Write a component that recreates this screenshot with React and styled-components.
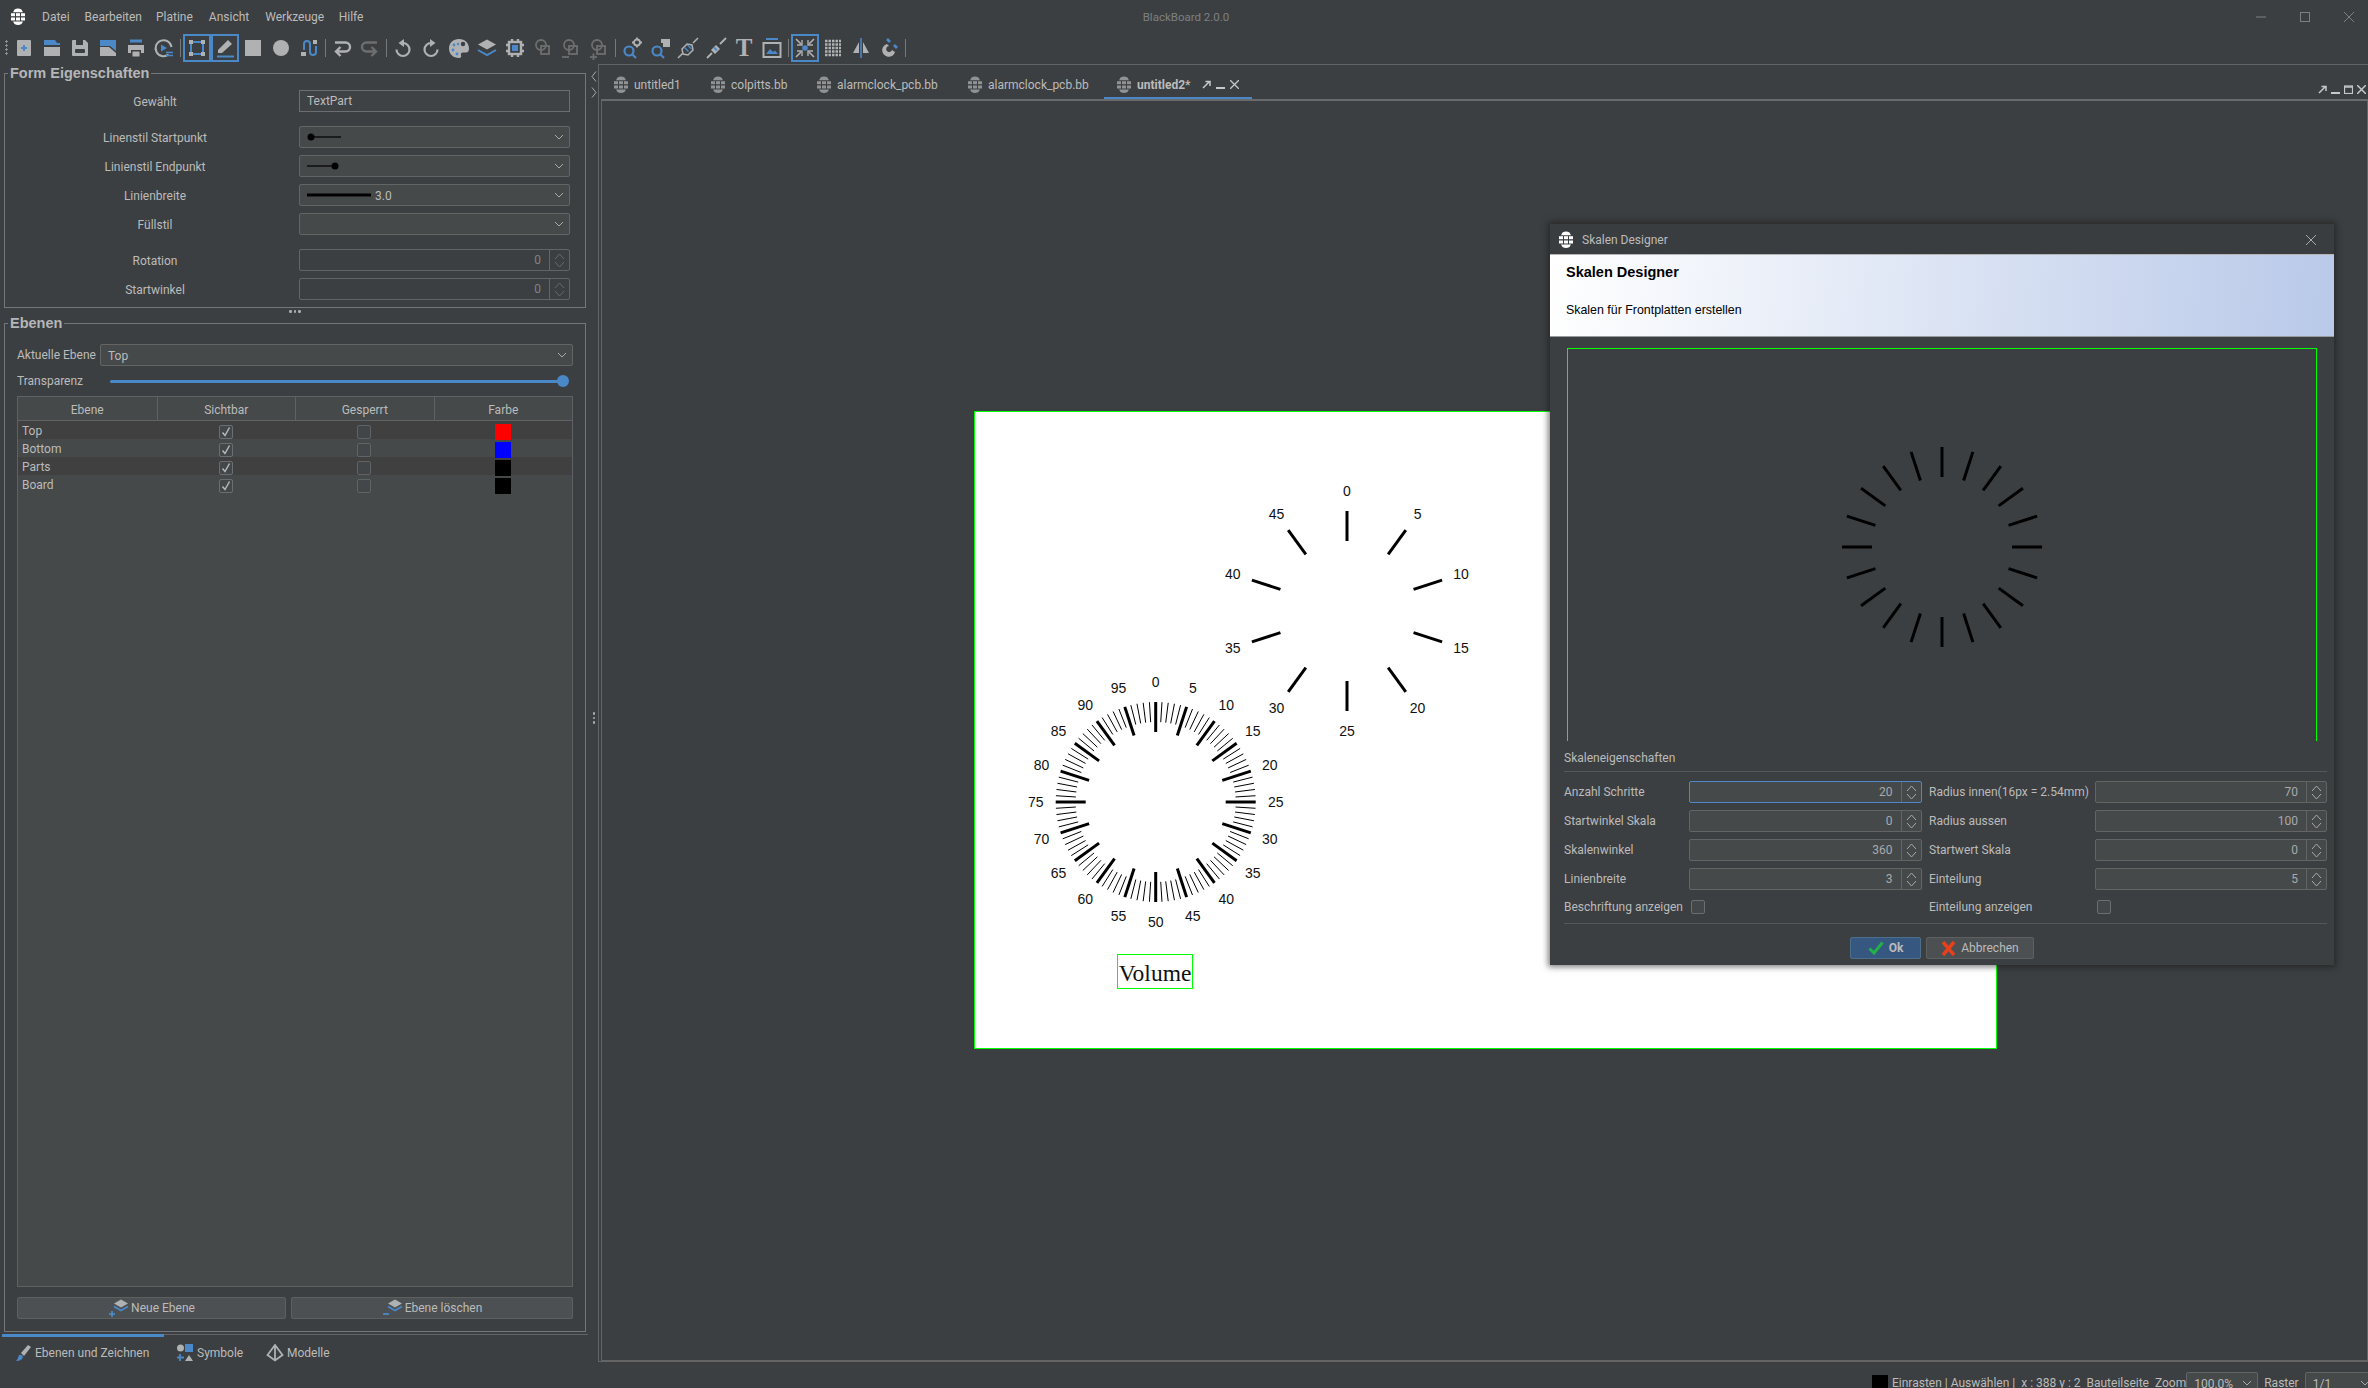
import React from 'react';
import styled, { createGlobalStyle } from 'styled-components';

const G = '#afb1b3';
const B = '#4a88c7';
const D = '#6e6e6e';
const BG = '#3c3f41';

const GlobalStyle = createGlobalStyle`
    html, body {
        margin: 0;
        padding: 0;
        background: ${BG};
    }
    * {
        box-sizing: border-box;
    }
`;

const Root = styled.div`
    position: relative;
    width: 2368px;
    height: 1388px;
    overflow: hidden;
    display: flex;
    flex-direction: column;
    background: ${BG};
    color: #bbbbbb;
    font-family: Roboto, 'Liberation Sans', sans-serif;
    font-size: 12px;
`;

/* title bar */
const TitleBar = styled.div`
    height: 34px;
    flex: none;
    display: grid;
    grid-template-columns: 1fr auto 1fr;
    align-items: center;
    padding-left: 10px;
`;

const MenuList = styled.div`
    display: flex;
    align-items: center;
`;

const MenuItem = styled.span`
    margin-left: ${(p) => p.$gap}px;
`;

const AppTitle = styled.div`
    color: #7d7f81;
    font-size: 11.5px;
    margin-right: 6px;
`;

const WindowButtons = styled.div`
    display: flex;
    justify-content: flex-end;
    align-items: center;
    gap: 34px;
    padding-right: 14px;
`;

/* toolbar */
const Toolbar = styled.div`
    height: 28px;
    flex: none;
    display: flex;
    align-items: center;
    padding-left: 5px;
`;

const Grip = styled.div`
    width: 5px;
    height: 16px;
    background-image: radial-gradient(circle at 1.5px 1.5px, #8a8c8e 1px, transparent 1.2px);
    background-size: 5px 4px;
`;

const ToolButton = styled.div`
    width: 28px;
    height: 28px;
    flex: none;
    display: flex;
    align-items: center;
    justify-content: center;
    border: 2px solid ${(p) => (p.$active ? B : 'transparent')};
`;

const ToolSep = styled.div`
    width: 5px;
    height: 18px;
    flex: none;
    display: flex;
    justify-content: center;
    &::after {
        content: '';
        width: 1px;
        background: #777a7c;
    }
`;

const ToolLetter = styled.span`
    font-family: 'Liberation Serif', serif;
    font-weight: 700;
    font-size: 25px;
    line-height: 24px;
    color: ${G};
`;

/* main */
const Body = styled.div`
    flex: 1;
    min-height: 0;
    display: flex;
`;

const LeftColumn = styled.div`
    width: 590px;
    flex: none;
    display: flex;
    flex-direction: column;
    padding: 3px 0 0 4px;
`;

const GroupBox = styled.fieldset`
    width: 582px;
    height: ${(p) => p.$height}px;
    flex: none;
    margin: 0;
    padding: ${(p) => p.$padding};
    border: 1px solid #747779;
    min-width: 0;
`;

const GroupTitle = styled.legend`
    margin-left: ${(p) => p.$shift}px;
    padding: 0 2px;
    height: 16px;
    line-height: 16px;
    font-family: 'Liberation Sans', sans-serif;
    font-weight: 700;
    font-size: 14.5px;
    color: #b4b6b8;
`;

const FormGrid = styled.div`
    display: grid;
    grid-template-columns: 294px 271px;
    grid-auto-rows: 22px;
    row-gap: 7px;
    align-items: center;
    margin-top: ${(p) => p.$top || 0}px;
`;

const FormLabel = styled.div`
    text-align: center;
    padding: 2px 0 0 6px;
`;

const LineField = styled.div`
    height: 22px;
    padding-left: 7px;
    line-height: 21px;
    background: #3f4244;
    border: 1px solid #6b6e70;
`;

const ComboBox = styled.div`
    height: 22px;
    width: ${(p) => (p.$width ? `${p.$width}px` : 'auto')};
    flex: none;
    display: flex;
    align-items: center;
    padding: 0 5px 0 7px;
    background: #45494a;
    border: 1px solid #646464;
    border-radius: 2px;
    margin-right: ${(p) => p.$right || 0}px;
`;

const ComboText = styled.div`
    flex: 1;
    display: flex;
    align-items: center;
    gap: 4px;
    padding-top: 2px;
    & svg {
        margin-top: -2px;
    }
`;

const SpinBox = styled.div`
    height: 22px;
    display: flex;
    align-items: center;
    justify-content: flex-end;
    background: ${(p) => (p.$enabled ? '#45494a' : BG)};
    color: ${(p) => (p.$enabled ? '#a8aaac' : '#808284')};
    border: 1px solid ${(p) => (p.$focus ? B : '#646464')};
    border-radius: 2px;
`;

const SpinArrows = styled.div`
    width: 20px;
    height: 100%;
    margin-left: 8px;
    display: flex;
    align-items: center;
    justify-content: center;
    border-left: 1px solid #646464;
`;

const Splitter = styled.div`
    height: 7px;
    width: 582px;
    flex: none;
    display: flex;
    justify-content: center;
    align-items: center;
    gap: 2px;
`;

const Dot = styled.span`
    width: 2.5px;
    height: 2.5px;
    border-radius: 50%;
    background: #aaacae;
`;

const LayerTop = styled.div`
    height: 22px;
    display: grid;
    grid-template-columns: 83px 1fr;
    align-items: center;
`;

const SliderRow = styled.div`
    height: 30px;
    display: grid;
    grid-template-columns: 93px 1fr;
    align-items: center;
`;

const SliderTrack = styled.div`
    position: relative;
    height: 3px;
    margin-right: 5px;
    background: ${B};
    border-radius: 2px;
`;

const SliderKnob = styled.div`
    position: absolute;
    right: -1px;
    top: -5px;
    width: 12px;
    height: 12px;
    border-radius: 50%;
    background: ${B};
`;

const LayerTable = styled.div`
    height: 891px;
    background: #45494a;
    border: 1px solid #5f6264;
`;

const TableHead = styled.div`
    height: 24px;
    display: grid;
    grid-template-columns: repeat(4, 1fr);
    border-bottom: 1px solid #5f6264;
`;

const HeadCell = styled.div`
    display: flex;
    align-items: center;
    justify-content: center;
    padding-top: 2px;
    border-left: ${(p) => (p.$first ? 'none' : '1px solid #5f6264')};
`;

const TableRow = styled.div`
    height: 18px;
    display: grid;
    grid-template-columns: repeat(4, 1fr);
    align-items: center;
    background: ${(p) => (p.$odd ? '#404040' : '#45494a')};
`;

const NameCell = styled.div`
    padding: 1px 0 0 4px;
    line-height: 18px;
`;

const CenterCell = styled.div`
    display: flex;
    justify-content: center;
    align-items: center;
`;

const CheckBox = styled.div`
    width: 14px;
    height: 14px;
    flex: none;
    display: flex;
    align-items: center;
    justify-content: center;
    background: #43474a;
    border: 1px solid #6b6e70;
    border-radius: 2px;
    margin-top: ${(p) => p.$top || 0}px;
    opacity: ${(p) => (p.$dim ? 0.75 : 1)};
`;

const ColorSwatch = styled.div`
    width: 16px;
    height: 16px;
    margin-top: 2px;
    background: ${(p) => p.$color};
`;

const ButtonRow = styled.div`
    margin-top: 10px;
    display: grid;
    grid-template-columns: 269px 1fr;
    gap: 5px;
`;

const PlainButton = styled.div`
    height: 22px;
    display: flex;
    align-items: center;
    justify-content: center;
    gap: 1px;
    background: #4c5052;
    border: 1px solid #5e6060;
    border-radius: 2px;
`;

const SideTabs = styled.div`
    margin: 2px 0 0 -2px;
    width: 586px;
    display: flex;
    border-top: 1px solid #646464;
`;

const SideTab = styled.div`
    width: ${(p) => p.$width}px;
    height: 34px;
    margin-top: -1px;
    padding-left: ${(p) => p.$pad}px;
    display: flex;
    align-items: center;
    gap: 3px;
    border-top: 3px solid ${(p) => (p.$active ? B : 'transparent')};
`;

const HandleColumn = styled.div`
    width: 8px;
    flex: none;
    display: flex;
    flex-direction: column;
    align-items: center;
    padding-top: 9px;
    gap: 5px;
`;

const VerticalDots = styled.div`
    margin-top: 609px;
    display: flex;
    flex-direction: column;
    gap: 2px;
`;

const RightColumn = styled.div`
    flex: 1;
    min-width: 0;
    display: flex;
    flex-direction: column;
`;

const EditorPane = styled.div`
    margin-top: 2px;
    height: 1298px;
    flex: none;
    display: flex;
    flex-direction: column;
    padding-left: 2px;
    border-top: 1px solid #646464;
    border-left: 1px solid #646464;
    border-bottom: 1px solid #646464;
`;

const DocTabs = styled.div`
    height: 35px;
    flex: none;
    display: flex;
    align-items: stretch;
    padding-left: 2px;
`;

const DocTab = styled.div`
    display: flex;
    align-items: center;
    gap: 5px;
    width: ${(p) => p.$width}px;
    padding-left: ${(p) => p.$pad}px;
    padding-top: 7px;
    font-weight: ${(p) => (p.$active ? 700 : 400)};
    border-bottom: 3px solid ${(p) => (p.$active ? B : 'transparent')};
`;

const TabActions = styled.div`
    display: flex;
    align-items: center;
    gap: 5px;
    margin-left: 6px;
`;

const CornerButtons = styled.div`
    margin-left: auto;
    display: flex;
    align-items: center;
    gap: 4px;
    padding: 14px 2px 0 0;
`;

const Canvas = styled.div`
    position: relative;
    flex: 1;
    margin-top: -1px;
    border-top: 2px solid #686a6c;
    border-left: 1px solid #646464;
    border-right: 1px solid #646464;
    border-bottom: 1px solid #646464;
`;

const Board = styled.div`
    position: absolute;
    left: 372px;
    top: 310px;
    width: 1023px;
    height: 638px;
    background: #ffffff;
    border: 1px solid #00ff00;
`;

const VolumeLabel = styled.div`
    position: absolute;
    left: 142px;
    top: 542px;
    width: 76px;
    height: 35px;
    padding-top: 3px;
    display: flex;
    align-items: center;
    justify-content: center;
    border: 1px solid #00ff00;
    font-family: 'Liberation Serif', serif;
    font-size: 23.5px;
    color: #111111;
`;

const StatusBar = styled.div`
    flex: 1;
    display: flex;
    align-items: flex-start;
    padding: 10px 0 0 1274px;
`;

const StatusSwatch = styled.div`
    width: 16px;
    height: 16px;
    flex: none;
    margin: 3px 4px 0 0;
    background: #000000;
`;

const StatusText = styled.div`
    flex: 1;
    line-height: 22px;
    white-space: pre;
`;

const StatusLabel = styled.div`
    flex: none;
    line-height: 22px;
    margin: 0 6px;
`;

/* dialog */
const Dialog = styled.div`
    position: absolute;
    left: 1550px;
    top: 224px;
    width: 784px;
    height: 741px;
    display: flex;
    flex-direction: column;
    background: ${BG};
    box-shadow: 0 0 6px 2px rgba(20, 20, 20, 0.55);
`;

const DialogTitle = styled.div`
    height: 30px;
    flex: none;
    display: flex;
    align-items: center;
    gap: 8px;
    padding: 1px 17px 0 8px;
    background: #3a3d40;
`;

const DialogClose = styled.div`
    margin-left: auto;
    display: flex;
`;

const WizardHeader = styled.div`
    height: 83px;
    flex: none;
    padding: 9px 15px 0 16px;
    color: #000000;
    font-family: 'Liberation Sans', sans-serif;
    background: linear-gradient(95deg, #ffffff 0%, #b9c9e9 100%);
    border-top: 1px solid #b5b5b5;
    border-bottom: 1px solid #9a9a9a;
`;

const WizardTitle = styled.div`
    font-size: 14.5px;
    font-weight: 700;
    line-height: 16px;
`;

const WizardText = styled.div`
    margin-top: 22px;
    font-size: 12.4px;
    line-height: 16px;
`;

const Preview = styled.div`
    height: 393px;
    flex: none;
    margin: 11px 17px 0 17px;
    padding-top: 3px;
    display: flex;
    align-items: center;
    justify-content: center;
    border: 1px solid #00ff00;
    border-bottom: none;
`;

const SectionTitle = styled.div`
    height: 31px;
    flex: none;
    margin: 0 7px 0 14px;
    padding-top: 2px;
    line-height: 31px;
    border-bottom: 1px solid #55585a;
`;

const ScaleForm = styled.div`
    margin: 9px 7px 0 14px;
    display: grid;
    grid-template-columns: 124.5px 233px 7.5px 165.5px 1fr;
    grid-auto-rows: 22px;
    row-gap: 7px;
    align-items: center;
`;

const CheckRow = styled.div`
    grid-column: ${(p) => p.$col};
    align-self: start;
    margin-left: ${(p) => p.$left || 0}px;
    display: flex;
    height: 20px;
    align-items: center;
`;

const DialogRule = styled.div`
    margin: 4px 7px 0 14px;
    height: 1px;
    flex: none;
    background: #55585a;
`;

const DialogButtons = styled.div`
    margin-top: 13px;
    display: flex;
    justify-content: center;
    gap: 5px;
`;

const OkButton = styled.div`
    width: 71px;
    height: 22px;
    display: flex;
    align-items: center;
    justify-content: center;
    gap: 5px;
    background: #365880;
    border: 1px solid #4c708c;
    border-radius: 2px;
    font-weight: 700;
`;

const CancelButton = styled(OkButton)`
    width: 108px;
    background: #4c5052;
    border-color: #5e6060;
    font-weight: 400;
`;

/* ------ drawings ------ */
const Logo = ({ color = '#ffffff' }) => (
    <svg width='16' height='18' viewBox='0 0 16 18' fill={color}>
        <path d='M4.5 1.5Q8 -0.5 11.5 1.5L13 4.2H3Z' />
        <rect x='1' y='5.2' width='4' height='3' />
        <rect x='6' y='5.2' width='4' height='3' />
        <rect x='11' y='5.2' width='4' height='3' />
        <rect x='1' y='9.5' width='4' height='3' />
        <rect x='6' y='9.5' width='4' height='3' />
        <rect x='11' y='9.5' width='4' height='3' />
        <path d='M3 13.5H13L11.5 16Q8 18 4.5 16Z' />
    </svg>
);

const Chevron = ({ dir = 'down', color = '#a8aaac' }) => {
    const side = dir === 'left' || dir === 'right';
    const d = {
        down: 'M1 1L5 5L9 1',
        up: 'M1 5L5 1L9 5',
        left: 'M5 0L1 5L5 10',
        right: 'M1 0L5 5L1 10',
    }[dir];
    return (
        <svg width={side ? 6 : 10} height={side ? 11 : 6} viewBox={side ? '0 0 6 10' : '0 0 10 6'} fill='none' stroke={color} strokeWidth='1'>
            <path d={d} />
        </svg>
    );
};

const SpinIcon = ({ color }) => (
    <svg width='11' height='15' viewBox='0 0 11 15' fill='none' stroke={color} strokeWidth='1'>
        <path d='M1 6L5.5 1L10 6M1 9L5.5 14L10 9' />
    </svg>
);

const CheckMark = () => (
    <svg width='12' height='12' viewBox='0 0 12 12' fill='none' stroke='#b6b8ba' strokeWidth='1.5'>
        <path d='M2.5 6.5L5 9.5L9.5 1.5' />
    </svg>
);

const Icon = ({ children, size = 24 }) => (
    <svg width={size} height={size} viewBox='0 0 24 24' fill='none'>
        {children}
    </svg>
);

const GroupIcon = ({ mark }) => (
    <Icon>
        <g stroke={D} strokeWidth='1.8'>
            <circle cx='10' cy='9' r='5' />
            <rect x='10' y='10' width='8' height='8' />
            {mark && <path d='M3 21h7' />}
            {mark === '+' && <path d='M6.5 17.5v7' />}
        </g>
    </Icon>
);

const toolIcons = {
    new: (
        <>
            <rect x='5' y='4' width='14' height='16' rx='1' fill={G} />
            <path d='M12 9v6M9 12h6' stroke={B} strokeWidth='2' />
        </>
    ),
    open: (
        <>
            <path d='M4 4h11l2 3h3v2H4z' fill={B} />
            <path d='M4 11h16v9H4z' fill={G} />
        </>
    ),
    save: (
        <>
            <path d='M4 5q0-1 1-1h12l3 3v12q0 1-1 1H5q-1 0-1-1z' fill={G} />
            <rect x='8' y='4' width='7' height='5' fill={BG} />
            <rect x='7' y='13' width='10' height='4' rx='1' fill={BG} />
        </>
    ),
    saveAs: (
        <>
            <path d='M4 4h16v11l-6-5H4z' fill={B} />
            <path d='M4 11h9l7 6v3H4z' fill={G} />
        </>
    ),
    print: (
        <>
            <rect x='6' y='3.5' width='12' height='3' fill={B} />
            <path d='M4 9h16v8h-3v-3H7v3H4z' fill={G} />
            <rect x='8.5' y='15.5' width='7' height='5' fill={G} />
        </>
    ),
    preview: (
        <>
            <path d='M16.5 18.5A8 8 0 1 1 19.5 11' stroke={G} strokeWidth='2' />
            <path d='M9 8.5l6 3.5-6 3.5z' fill={B} />
            <path d='M14 16.5h7M14 19.5h7' stroke={B} strokeWidth='1.6' />
        </>
    ),
    nodes: (
        <>
            <rect x='6' y='6' width='12' height='12' stroke={B} strokeWidth='2' />
            <path d='M4 4h4v4H4zM16 4h4v4h-4zM4 16h4v4H4zM16 16h4v4h-4z' fill={G} />
        </>
    ),
    pen: (
        <>
            <path d='M5 14L15 4l4 4-10 9H5z' fill={G} />
            <path d='M4 20.5h17' stroke={B} strokeWidth='2' />
        </>
    ),
    square: <rect x='4' y='4' width='16' height='16' fill={G} />,
    circle: <circle cx='12' cy='12' r='8' fill={G} />,
    bezier: (
        <>
            <path d='M7 14V8a3 3 0 0 1 6 0v8a3 3 0 0 0 6 0V10' stroke={B} strokeWidth='2' />
            <path d='M4 16h5v4H4zM16 4h4v4h-4z' fill={G} />
        </>
    ),
    back: <path d='M5 6.5h10.5a4.5 4.5 0 0 1 0 9H6M10.5 11l-4.5 4.5 4.5 4.5' stroke={G} strokeWidth='2.4' />,
    forward: <path d='M19 6.5H8.5a4.5 4.5 0 0 0 0 9H18M13.5 11l4.5 4.5-4.5 4.5' stroke={D} strokeWidth='2.4' />,
    rotL: (
        <>
            <path d='M12 7a6.5 6.5 0 1 1-6.5 6.5' stroke={G} strokeWidth='2.2' />
            <path d='M13 3v8L7.5 7z' fill={G} />
        </>
    ),
    rotR: (
        <>
            <path d='M12 7a6.5 6.5 0 1 0 6.5 6.5' stroke={G} strokeWidth='2.2' />
            <path d='M11 3v8l5.5-4z' fill={G} />
        </>
    ),
    palette: (
        <>
            <path d='M12 3C6 3 2 7 2 12.5S6 22 12 22c2 0 2.5-1 2-2.5s0-3 2-3h3c2 0 3-1.5 3-4C22 7 18 3 12 3z' fill={G} />
            <circle cx='16' cy='8' r='2.2' fill={BG} />
            <circle cx='7' cy='9' r='1.4' fill={B} />
            <circle cx='11' cy='8' r='1.2' fill={B} />
            <circle cx='6' cy='14' r='1.4' fill={B} />
            <circle cx='10' cy='18' r='1.4' fill={B} />
        </>
    ),
    layers: (
        <>
            <path d='M12 3.5l9 5-9 5-9-5z' fill={G} />
            <path d='M3 14l9 5 9-5' stroke={B} strokeWidth='2' />
        </>
    ),
    chip: (
        <>
            <rect x='6' y='6' width='12' height='12' stroke={G} strokeWidth='2.4' />
            <rect x='9' y='9' width='6' height='6' fill={B} />
            <path d='M9 3v2M15 3v2M9 19v2M15 19v2M3 9h2M3 15h2M19 9h2M19 15h2' stroke={G} strokeWidth='2.4' />
        </>
    ),
    group: <GroupIcon />,
    ungroup: <GroupIcon mark='-' />,
    addGroup: <GroupIcon mark='+' />,
    findPart: (
        <>
            <circle cx='9' cy='15' r='4.5' stroke={B} strokeWidth='2.2' />
            <path d='M12.5 18.5l3.5 3.5' stroke={B} strokeWidth='2.2' />
            <circle cx='17' cy='6.5' r='3' stroke={G} strokeWidth='1.8' />
            <path d='M17 1.5v2M17 9.5v2M12 6.5h2M20 6.5h2' stroke={G} strokeWidth='1.8' />
        </>
    ),
    findPage: (
        <>
            <circle cx='9' cy='15' r='4.5' stroke={B} strokeWidth='2.2' />
            <path d='M12.5 18.5l3.5 3.5' stroke={B} strokeWidth='2.2' />
            <path d='M13 3h9v8h-7v-4h-2z' fill={G} />
        </>
    ),
    resistor: (
        <>
            <path d='M2 22l5-5M17 7l5-5' stroke={G} strokeWidth='1.5' />
            <path d='M6 13l5-5 5 1 1 5-5 5-5-1z' stroke={G} strokeWidth='1.5' />
            <path d='M8.5 11.5l4 4M11.5 9l4 4' stroke={B} strokeWidth='1.5' />
        </>
    ),
    diode: (
        <>
            <path d='M3 22l5-5M16 8l6-6' stroke={G} strokeWidth='1.8' />
            <path d='M7 14l5-5 4 4-5 5z' fill={G} />
            <path d='M10 11.5l3 3' stroke={B} strokeWidth='1.8' />
        </>
    ),
    image: (
        <>
            <path d='M6 3h12' stroke={B} strokeWidth='2' />
            <rect x='3.5' y='7' width='17' height='14' stroke={G} strokeWidth='2' />
            <path d='M6 18l4-5 3 3 2-1.5 3 3.5z' fill={B} />
        </>
    ),
    snap: (
        <>
            <circle cx='12' cy='12' r='2.8' fill={B} />
            <path d='M3 3l5 5M21 3l-5 5M3 21l5-5M21 21l-5-5' stroke={G} strokeWidth='1.6' />
            <path d='M4 9h5V4M20 9h-5V4M4 15h5v5M20 15h-5v5' stroke={G} strokeWidth='1.4' />
        </>
    ),
    grid: (
        <path
            d='M4 5h16M4 8.5h16M4 12h16M4 15.5h16M4 19h16'
            stroke={G}
            strokeWidth='2.5'
            strokeDasharray='2.5 1'
        />
    ),
    mirror: (
        <>
            <path d='M12 2v20' stroke={B} strokeWidth='1.6' />
            <path d='M10 6v11H4zM14 6v11h6z' fill={G} />
        </>
    ),
    magnet: (
        <>
            <path d='M10 8a6.5 6.5 0 1 0 8 8l-3-2a3 3 0 1 1-3-4z' fill={G} />
            <path d='M10 3l3 3M17 9l3 3' stroke={B} strokeWidth='2.8' />
        </>
    ),
};

const toolbarLayout = [
    ['new', 'open', 'save', 'saveAs', 'print', 'preview'],
    ['nodes*', 'pen*', 'square', 'circle', 'bezier'],
    ['back', 'forward'],
    ['rotL', 'rotR', 'palette', 'layers', 'chip', 'group', 'ungroup', 'addGroup'],
    ['findPart', 'findPage', 'resistor', 'diode', 'text', 'image'],
    ['snap*', 'grid', 'mirror', 'magnet'],
];

const LayerActionIcon = ({ mark }) => (
    <svg width='22' height='20' viewBox='0 0 22 20' fill='none'>
        <path d='M13 1.5l7 4-7 4-7-4z' fill={G} />
        <path d='M6 8.5l7 4 7-4' stroke={B} strokeWidth='1.8' />
        <path d='M1 16h6' stroke={B} strokeWidth='1.8' />
        {mark === '+' && <path d='M4 13v6' stroke={B} strokeWidth='1.8' />}
    </svg>
);

const TabFloatIcon = () => (
    <svg width='9' height='9' viewBox='0 0 9 9' fill='none' stroke='#c5c7c9' strokeWidth='1.5'>
        <path d='M1 8l6-6M3.5 1.5h4.500V6' />
    </svg>
);

const TabMinIcon = () => (
    <svg width='9' height='9' viewBox='0 0 9 9' stroke='#c5c7c9' strokeWidth='2'>
        <path d='M0 8h9' />
    </svg>
);

const polar = (cx, cy, r, deg) => {
    const a = (deg * Math.PI) / 180;
    return [cx + r * Math.sin(a), cy - r * Math.cos(a)];
};

const Dial = ({ cx, cy, divisions, majorEvery = 1, labelRadius, labels = true }) => {
    const parts = [];
    for (let i = 0; i < divisions; i++) {
        const deg = (i * 360) / divisions;
        const major = i % majorEvery === 0;
        const [x1, y1] = polar(cx, cy, major ? 70 : 80, deg);
        const [x2, y2] = polar(cx, cy, 100, deg);
        parts.push(<line key={`t${i}`} x1={x1} y1={y1} x2={x2} y2={y2} stroke='#000' strokeWidth={major ? 3 : 1} />);
        if (labels && major) {
            const [lx, ly] = polar(cx, cy, labelRadius, deg);
            const value = majorEvery === 1 ? i * 5 : i;
            parts.push(
                <text key={`l${i}`} x={lx} y={ly + 5} textAnchor='middle' fontFamily="'Liberation Sans', sans-serif" fontSize='14' fill='#111'>
                    {value}
                </text>,
            );
        }
    }
    return <g>{parts}</g>;
};

const LAYERS = [
    { name: 'Top', color: '#ff0000' },
    { name: 'Bottom', color: '#0000ff' },
    { name: 'Parts', color: '#000000' },
    { name: 'Board', color: '#000000' },
];

const SCALE_ROWS = [
    ['Anzahl Schritte', '20', 'Radius innen(16px = 2.54mm)', '70'],
    ['Startwinkel Skala', '0', 'Radius aussen', '100'],
    ['Skalenwinkel', '360', 'Startwert Skala', '0'],
    ['Linienbreite', '3', 'Einteilung', '5'],
];

const DOC_TABS = [
    { name: 'untitled1', width: 97 },
    { name: 'colpitts.bb', width: 106 },
    { name: 'alarmclock_pcb.bb', width: 151 },
    { name: 'alarmclock_pcb.bb', width: 147 },
];

const Spin = ({ value, enabled, focus }) => (
    <SpinBox $enabled={enabled} $focus={focus}>
        {value}
        <SpinArrows>
            <SpinIcon color={enabled ? '#a8aaac' : '#666a6c'} />
        </SpinArrows>
    </SpinBox>
);

const Combo = ({ children, width, right }) => (
    <ComboBox $width={width} $right={right}>
        <ComboText>{children}</ComboText>
        <Chevron />
    </ComboBox>
);

const App = () => {
    return (
        <Root>
            <GlobalStyle />
            <TitleBar>
                <MenuList>
                    <Logo />
                    <MenuItem $gap={16}>Datei</MenuItem>
                    <MenuItem $gap={15}>Bearbeiten</MenuItem>
                    <MenuItem $gap={14}>Platine</MenuItem>
                    <MenuItem $gap={16}>Ansicht</MenuItem>
                    <MenuItem $gap={16}>Werkzeuge</MenuItem>
                    <MenuItem $gap={14.5}>Hilfe</MenuItem>
                </MenuList>
                <AppTitle>BlackBoard 2.0.0</AppTitle>
                <WindowButtons>
                    <svg width='10' height='10' viewBox='0 0 10 10' stroke='#7d7f81'>
                        <path d='M0 5h10' />
                    </svg>
                    <svg width='10' height='10' viewBox='0 0 10 10' fill='none' stroke='#7d7f81'>
                        <rect x='.5' y='.5' width='9' height='9' />
                    </svg>
                    <svg width='10' height='10' viewBox='0 0 10 10' stroke='#7d7f81'>
                        <path d='M0 0l10 10M10 0L0 10' />
                    </svg>
                </WindowButtons>
            </TitleBar>
            <Toolbar>
                <Grip />
                {toolbarLayout.map((group, i) => (
                    <React.Fragment key={i}>
                        {i > 0 && <ToolSep />}
                        {group.map((name) => {
                            const key = name.replace('*', '');
                            return (
                                <ToolButton key={key} $active={name.endsWith('*')}>
                                    {key === 'text' ? <ToolLetter>T</ToolLetter> : <Icon>{toolIcons[key]}</Icon>}
                                </ToolButton>
                            );
                        })}
                    </React.Fragment>
                ))}
                <ToolSep />
            </Toolbar>
            <Body>
                <LeftColumn>
                    <GroupBox $height={243} $padding='9px 14px 0 0'>
                        <GroupTitle $shift={3}>Form Eigenschaften</GroupTitle>
                        <FormGrid>
                            <FormLabel>Gewählt</FormLabel>
                            <LineField>TextPart</LineField>
                        </FormGrid>
                        <FormGrid $top={14}>
                            <FormLabel>Linenstil Startpunkt</FormLabel>
                            <Combo>
                                <svg width='34' height='10' viewBox='0 0 34 10'>
                                    <circle cx='4' cy='5' r='3.5' fill='#000' />
                                    <path d='M4 5h30' stroke='#000' strokeWidth='1.2' />
                                </svg>
                            </Combo>
                            <FormLabel>Linienstil Endpunkt</FormLabel>
                            <Combo>
                                <svg width='34' height='10' viewBox='0 0 34 10'>
                                    <circle cx='28' cy='5' r='3.5' fill='#000' />
                                    <path d='M0 5h28' stroke='#000' strokeWidth='1.2' />
                                </svg>
                            </Combo>
                            <FormLabel>Linienbreite</FormLabel>
                            <Combo>
                                <svg width='64' height='4' viewBox='0 0 64 4'>
                                    <rect width='64' height='3' y='.5' fill='#000' />
                                </svg>
                                3.0
                            </Combo>
                            <FormLabel>Füllstil</FormLabel>
                            <Combo />
                        </FormGrid>
                        <FormGrid $top={14}>
                            <FormLabel>Rotation</FormLabel>
                            <Spin value='0' />
                            <FormLabel>Startwinkel</FormLabel>
                            <Spin value='0' />
                        </FormGrid>
                    </GroupBox>
                    <Splitter>
                        <Dot />
                        <Dot />
                        <Dot />
                    </Splitter>
                    <GroupBox $height={1017} $padding='13px 12px 0 12px'>
                        <GroupTitle $shift={-9}>Ebenen</GroupTitle>
                        <LayerTop>
                            <span>Aktuelle Ebene</span>
                            <Combo>Top</Combo>
                        </LayerTop>
                        <SliderRow>
                            <span>Transparenz</span>
                            <SliderTrack>
                                <SliderKnob />
                            </SliderTrack>
                        </SliderRow>
                        <LayerTable>
                            <TableHead>
                                <HeadCell $first>Ebene</HeadCell>
                                <HeadCell>Sichtbar</HeadCell>
                                <HeadCell>Gesperrt</HeadCell>
                                <HeadCell>Farbe</HeadCell>
                            </TableHead>
                            {LAYERS.map((layer, i) => (
                                <TableRow key={layer.name} $odd={i % 2 === 0}>
                                    <NameCell>{layer.name}</NameCell>
                                    <CenterCell>
                                        <CheckBox $top={2}>
                                            <CheckMark />
                                        </CheckBox>
                                    </CenterCell>
                                    <CenterCell>
                                        <CheckBox $top={2} $dim />
                                    </CenterCell>
                                    <CenterCell>
                                        <ColorSwatch $color={layer.color} />
                                    </CenterCell>
                                </TableRow>
                            ))}
                        </LayerTable>
                        <ButtonRow>
                            <PlainButton>
                                <LayerActionIcon mark='+' />
                                Neue Ebene
                            </PlainButton>
                            <PlainButton>
                                <LayerActionIcon mark='-' />
                                Ebene löschen
                            </PlainButton>
                        </ButtonRow>
                    </GroupBox>
                    <SideTabs>
                        <SideTab $active $width={162} $pad={12}>
                            <svg width='18' height='18' viewBox='0 0 18 18'>
                                <path d='M7 9l7-8 3 2-7 9z' fill={G} />
                                <path d='M5 11q3-1 4 2-1 4-7 4 2-2 3-6z' fill={B} />
                            </svg>
                            Ebenen und Zeichnen
                        </SideTab>
                        <SideTab $width={92} $pad={12}>
                            <svg width='18' height='18' viewBox='0 0 18 18'>
                                <circle cx='4.5' cy='4' r='3.5' fill={G} />
                                <rect x='9' y='0' width='8' height='8' fill={B} />
                                <path d='M4 10v7M1 13.5h7' stroke={B} strokeWidth='1.8' />
                                <path d='M13 11l4 6H9z' fill={G} />
                            </svg>
                            Symbole
                        </SideTab>
                        <SideTab $width={100} $pad={10}>
                            <svg width='18' height='18' viewBox='0 0 18 18' fill='none' stroke={G} strokeWidth='1.8'>
                                <path d='M9 1L1.5 11 9 16.5 16.5 11zM9 1v15.5' />
                            </svg>
                            Modelle
                        </SideTab>
                    </SideTabs>
                </LeftColumn>
                <HandleColumn>
                    <Chevron dir='left' />
                    <Chevron dir='right' />
                    <VerticalDots>
                        <Dot />
                        <Dot />
                        <Dot />
                    </VerticalDots>
                </HandleColumn>
                <RightColumn>
                    <EditorPane>
                        <DocTabs>
                            {DOC_TABS.map((tab) => (
                                <DocTab key={tab.width} $width={tab.width} $pad={10}>
                                    <Logo color='#909294' />
                                    {tab.name}
                                </DocTab>
                            ))}
                            <DocTab $active $width={148} $pad={12}>
                                <Logo color='#909294' />
                                untitled2*
                                <TabActions>
                                    <TabFloatIcon />
                                    <TabMinIcon />
                                    <svg width='9' height='9' viewBox='0 0 9 9' stroke='#c5c7c9' strokeWidth='1.3'>
                                        <path d='M0 0l9 9M9 0L0 9' />
                                    </svg>
                                </TabActions>
                            </DocTab>
                            <CornerButtons>
                                <TabFloatIcon />
                                <TabMinIcon />
                                <svg width='9' height='9' viewBox='0 0 9 9' fill='none' stroke='#c5c7c9' strokeWidth='1.2'>
                                    <rect x='.5' y='1' width='8' height='7.5' />
                                    <path d='M0 2h9' strokeWidth='1.5' />
                                </svg>
                                <svg width='9' height='9' viewBox='0 0 9 9' stroke='#c5c7c9' strokeWidth='1.5'>
                                    <path d='M0 0l9 9M9 0L0 9' />
                                </svg>
                            </CornerButtons>
                        </DocTabs>
                        <Canvas>
                            <Board>
                                <svg width='1021' height='636' viewBox='0 0 1021 636'>
                                    <Dial cx={372} cy={199} divisions={10} labelRadius={120} />
                                    <Dial cx={180.7} cy={390} divisions={100} majorEvery={5} labelRadius={120} />
                                </svg>
                                <VolumeLabel>Volume</VolumeLabel>
                            </Board>
                        </Canvas>
                    </EditorPane>
                    <StatusBar>
                        <StatusSwatch />
                        <StatusText>{'Einrasten | Auswählen |  x : 388 y : 2  Bauteilseite  Zoom'}</StatusText>
                        <Combo width={72}>100.0%</Combo>
                        <StatusLabel>Raster</StatusLabel>
                        <Combo width={71} right={-3}>
                            1/1
                        </Combo>
                    </StatusBar>
                </RightColumn>
            </Body>
            <Dialog>
                <DialogTitle>
                    <Logo />
                    Skalen Designer
                    <DialogClose>
                        <svg width='12' height='12' viewBox='0 0 12 12' stroke='#a8aaac'>
                            <path d='M1 1l10 10M11 1L1 11' />
                        </svg>
                    </DialogClose>
                </DialogTitle>
                <WizardHeader>
                    <WizardTitle>Skalen Designer</WizardTitle>
                    <WizardText>Skalen für Frontplatten erstellen</WizardText>
                </WizardHeader>
                <Preview>
                    <svg width='220' height='220' viewBox='0 0 220 220'>
                        <Dial cx={110} cy={110} divisions={20} labels={false} />
                    </svg>
                </Preview>
                <SectionTitle>Skaleneigenschaften</SectionTitle>
                <ScaleForm>
                    {SCALE_ROWS.map(([labelA, valueA, labelB, valueB], i) => (
                        <React.Fragment key={labelA}>
                            <span>{labelA}</span>
                            <Spin value={valueA} enabled focus={i === 0} />
                            <span />
                            <span>{labelB}</span>
                            <Spin value={valueB} enabled />
                        </React.Fragment>
                    ))}
                    <CheckRow $col='1'>Beschriftung anzeigen</CheckRow>
                    <CheckRow $col='2' $left={2}>
                        <CheckBox />
                    </CheckRow>
                    <CheckRow $col='4'>Einteilung anzeigen</CheckRow>
                    <CheckRow $col='5' $left={2}>
                        <CheckBox />
                    </CheckRow>
                </ScaleForm>
                <DialogRule />
                <DialogButtons>
                    <OkButton>
                        <svg width='16' height='14' viewBox='0 0 16 14' fill='none' stroke='#22b04a' strokeWidth='3'>
                            <path d='M1.5 7.5L6 12 14.5 1.5' />
                        </svg>
                        Ok
                    </OkButton>
                    <CancelButton>
                        <svg width='15' height='15' viewBox='0 0 15 15' stroke='#e8401c' strokeWidth='3.5'>
                            <path d='M2 1l11 13M13 1L2 14' />
                        </svg>
                        Abbrechen
                    </CancelButton>
                </DialogButtons>
            </Dialog>
        </Root>
    );
};

export default App;
